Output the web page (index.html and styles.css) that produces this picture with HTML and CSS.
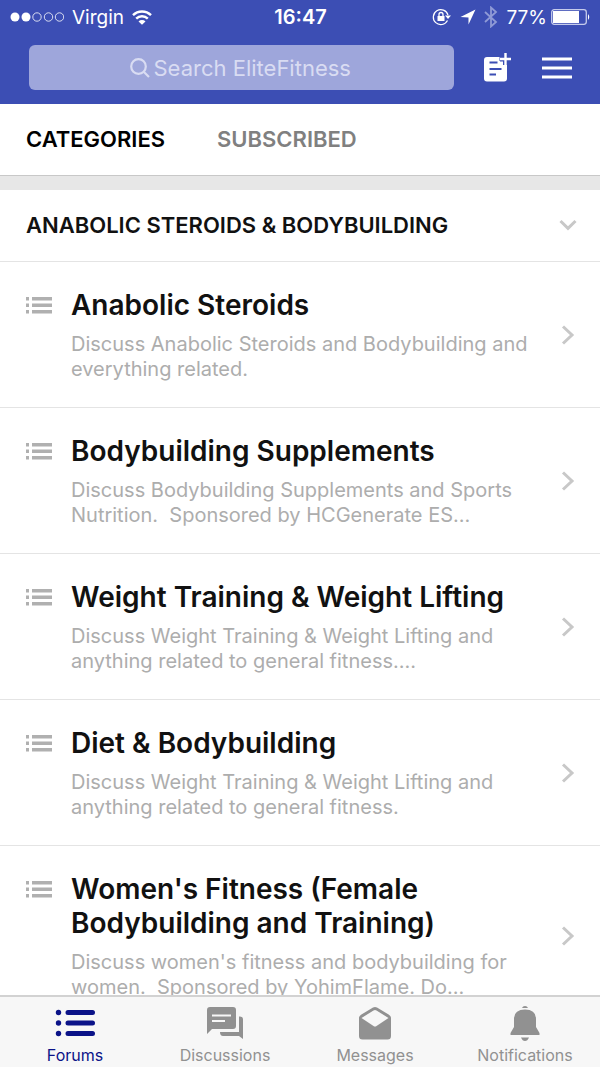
FILE: index.html
```html
<!DOCTYPE html>
<html lang="en">
  <head>
    <meta charset="UTF-8" />
    <meta name="viewport" content="width=device-width, initial-scale=1.0" />
    <title>EliteFitness Forums</title>
    <link rel="stylesheet" href="styles.css">
  </head>
  <body>
    <!-- Shared icons -->
    <svg class="sprite" aria-hidden="true">
      <symbol id="icon-list" viewBox="0 0 26 17">
        <path d="M0 0h3v3.500H0zM6 0h20v3.500H6zM0 6.500h3V10H0zM6 6.500h20V10H6zM0 13h3v3.500H0zM6 13h20v3.500H6z" />
      </symbol>
      <symbol id="icon-chevron" viewBox="0 0 14 20">
        <path d="M2 1.500 11 10l-9 8.500" fill="none" stroke="currentColor" stroke-width="3" />
      </symbol>
    </svg>

    <header class="header">
      <div class="status">
        <div class="status-left">
          <svg width="54" height="10" viewBox="0 0 54 10">
            <g fill="#fff"><circle cx="5" cy="5" r="4.500" /><circle cx="16" cy="5" r="4.500" /></g>
            <g fill="none" stroke="#fff" stroke-width="0.800"><circle cx="27" cy="5" r="4.200" /><circle cx="38.500" cy="5" r="4.200" /><circle cx="49.500" cy="5" r="4.200" /></g>
          </svg>
          <span>Virgin</span>
          <svg width="20" height="15" viewBox="0 0 20 15">
            <g fill="none" stroke="#fff" stroke-width="2.400"><path d="M1 5.200a12.800 12.800 0 0 1 18 0" /><path d="M4.200 8.700a8.200 8.200 0 0 1 11.600 0" /></g>
            <path d="M10 14.800 6.500 11.400a4.900 4.900 0 0 1 7 0z" fill="#fff" />
          </svg>
        </div>
        <strong class="status-time">16:47</strong>
        <div class="status-right">
          <svg width="20" height="18" viewBox="0 0 20 18">
            <path d="M15.500 12.500A7.500 7.500 0 1 1 16 7" fill="none" stroke="#fff" stroke-width="1.200" />
            <path d="M13 7.500h6l-3 3.500zM5.500 8h7v5h-7z" fill="#fff" />
            <path d="M7 8V6.500a2 2 0 0 1 4 0V8" fill="none" stroke="#fff" stroke-width="1.300" />
          </svg>
          <svg width="16" height="16" viewBox="0 0 16 16"><path d="M15.500.5 8.500 15.500V8.500L.5 8z" fill="#fff" /></svg>
          <svg width="14" height="22" viewBox="0 0 14 22"><path d="M1 6l11 10-5 4.500V1.500L12 6 1 16" fill="none" stroke="#8f9ad6" stroke-width="1.800" /></svg>
          <div class="charge">
            <span>77%</span>
            <svg width="40" height="16" viewBox="0 0 40 16">
              <rect x="0.700" y="0.700" width="34.600" height="14.600" rx="2.500" fill="none" stroke="#c5cbeb" stroke-width="1.300" />
              <path d="M2 2h26v12H2z" fill="#fff" /><path d="M37 5q2.500 3 0 6z" fill="#fff" />
            </svg>
          </div>
        </div>
      </div>
      <div class="toolbar">
        <label class="search">
          <svg width="20" height="20" viewBox="0 0 20 20" fill="none" stroke="currentColor" stroke-width="2.200"><circle cx="8.500" cy="8.500" r="7.300" /><path d="M13.500 13.500 19 19" /></svg>
          <input type="search" placeholder="Search EliteFitness" aria-label="Search EliteFitness" />
        </label>
        <button class="icon-button" aria-label="New post">
          <svg width="27" height="32" viewBox="0 0 27 32">
            <path d="M3 5h12.500v4H19v4h4v13.500a3 3 0 0 1-3 3H3a3 3 0 0 1-3-3V8a3 3 0 0 1 3-3z" fill="#fff" />
            <path d="M5.500 10.500h8M5.500 17h12M5.500 22.500H12" stroke="#3c4eb4" stroke-width="2.200" />
            <path d="M21.500 1v12M16 7h11" stroke="#3c4eb4" stroke-width="5" />
            <path d="M21.500 1v12M16 7h11" stroke="#fff" stroke-width="2.400" />
          </svg>
        </button>
        <button class="icon-button" aria-label="Menu">
          <svg width="30" height="22" viewBox="0 0 30 22"><path d="M0 2h30M0 11h30M0 20h30" stroke="#fff" stroke-width="3" /></svg>
        </button>
      </div>
    </header>

    <nav class="tabs">
      <a class="active" href="#categories">CATEGORIES</a>
      <a href="#subscribed">SUBSCRIBED</a>
    </nav>

    <main class="forums" id="categories">
      <button class="section">
        <span>ANABOLIC STEROIDS &amp; BODYBUILDING</span>
        <svg width="18" height="12" viewBox="0 0 18 12"><path d="M1.500 2 9 9.300 16.500 2" fill="none" stroke="#c8c8c8" stroke-width="3" /></svg>
      </button>

      <a class="forum" href="#anabolic-steroids">
        <svg class="forum-icon"><use href="#icon-list" /></svg>
        <div class="forum-text">
          <h2>Anabolic Steroids</h2>
          <p>Discuss Anabolic Steroids and Bodybuilding and<br />everything related.</p>
        </div>
        <svg class="chevron"><use href="#icon-chevron" /></svg>
      </a>

      <a class="forum" href="#supplements">
        <svg class="forum-icon"><use href="#icon-list" /></svg>
        <div class="forum-text">
          <h2>Bodybuilding Supplements</h2>
          <p>Discuss Bodybuilding Supplements and Sports<br />Nutrition.&nbsp; Sponsored by HCGenerate ES...</p>
        </div>
        <svg class="chevron"><use href="#icon-chevron" /></svg>
      </a>

      <a class="forum" href="#weight-training">
        <svg class="forum-icon"><use href="#icon-list" /></svg>
        <div class="forum-text">
          <h2>Weight Training &amp; Weight Lifting</h2>
          <p>Discuss Weight Training &amp; Weight Lifting and<br />anything related to general fitness....</p>
        </div>
        <svg class="chevron"><use href="#icon-chevron" /></svg>
      </a>

      <a class="forum" href="#diet">
        <svg class="forum-icon"><use href="#icon-list" /></svg>
        <div class="forum-text">
          <h2>Diet &amp; Bodybuilding</h2>
          <p>Discuss Weight Training &amp; Weight Lifting and<br />anything related to general fitness.</p>
        </div>
        <svg class="chevron"><use href="#icon-chevron" /></svg>
      </a>

      <a class="forum" href="#womens-fitness">
        <svg class="forum-icon"><use href="#icon-list" /></svg>
        <div class="forum-text">
          <h2>Women's Fitness (Female<br />Bodybuilding and Training)</h2>
          <p>Discuss women's fitness and bodybuilding for<br />women.&nbsp; Sponsored by YohimFlame. Do...</p>
        </div>
        <svg class="chevron"><use href="#icon-chevron" /></svg>
      </a>
    </main>

    <nav class="bottom-nav">
      <a class="active" href="#forums">
        <svg width="40" height="36" viewBox="0 0 40 36">
          <g fill="currentColor"><circle cx="3.500" cy="7.500" r="2.700" /><circle cx="3.500" cy="18" r="2.700" /><circle cx="3.500" cy="28.500" r="2.700" /></g>
          <path d="M13 7.500h24.500M13 18h24.500M13 28.500h24.500" stroke="currentColor" stroke-width="5" stroke-linecap="round" />
        </svg>
        <span>Forums</span>
      </a>
      <a href="#discussions">
        <svg width="36" height="36" viewBox="0 0 36 36">
          <path d="M3 2h23a3 3 0 0 1 3 3v16a3 3 0 0 1-3 3H5l-5 5V5a3 3 0 0 1 3-3z" fill="currentColor" />
          <path d="M32 11.500h1a3 3 0 0 1 3 3V34l-4-3H16q-3 0-3-4h19z" fill="currentColor" />
          <path d="M5 10.500h19M5 16h13" stroke="#f7f7f7" stroke-width="2" />
        </svg>
        <span>Discussions</span>
      </a>
      <a href="#messages">
        <svg width="34" height="36" viewBox="0 0 34 36">
          <path d="M15 2.500q2-1 4 0l12 7.300q2 1.200 2 3.200v18q0 3.500-3.500 3.500h-25Q1 34.500 1 31V13q0-2 2-3.200z" fill="currentColor" />
          <path d="m3.500 13 12-7.500q1.500-1 3 0l12 7.500-12 8q-1.500 1-3 0z" fill="#f7f7f7" />
        </svg>
        <span>Messages</span>
      </a>
      <a href="#notifications">
        <svg width="30" height="36" viewBox="0 0 30 36" fill="currentColor">
          <path d="M12 3a3.200 3.200 0 0 1 6 0zM4 14Q4 4.500 15 4.500T26 14v8l3.500 6v2H.5v-2L4 22zM11 32.500h8q-1.500 3.500-4 3.500t-4-3.500z" />
        </svg>
        <span>Notifications</span>
      </a>
    </nav>
  </body>
</html>
```
FILE: styles.css
```css
* {
  box-sizing: border-box;
}
body {
  display: flex;
  flex-direction: column;
  height: 100vh;
  margin: 0;
  background-color: #fff;
  color: #111;
  font-family: Inter, sans-serif;
}
a {
  color: inherit;
  text-decoration: none;
}
button {
  padding: 0;
  border: none;
  background: none;
  color: inherit;
  font: inherit;
}
svg {
  flex: none;
}
.sprite {
  display: none;
}

/* Header */
.header {
  flex: none;
  background-color: #3c4eb4;
  color: #fff;
}
.status {
  display: grid;
  grid-template-columns: 1fr auto 1fr;
  align-items: center;
  height: 34px;
  padding: 0 9px 0 10px;
  font-size: 19px;
}
.status-left,
.status-right {
  display: flex;
  align-items: center;
  gap: 8px;
}
.status-right {
  justify-content: flex-end;
}
.charge {
  display: flex;
  align-items: center;
  gap: 4px;
}
.status-time {
  font-size: 20px;
  font-weight: 600;
}
.toolbar {
  display: flex;
  align-items: center;
  padding: 11px 28px 14px 29px;
}
.search {
  display: flex;
  flex: 1;
  align-items: center;
  justify-content: center;
  gap: 4px;
  height: 45px;
  margin-right: 30px;
  border-radius: 6px;
  background-color: #9ea6db;
  color: #d9dcf2;
}
.search input {
  width: 200px;
  padding: 0;
  border: none;
  outline: none;
  background: none;
  color: #fff;
  font: 22px Inter, sans-serif;
  appearance: none;
}
.search input::-webkit-search-cancel-button {
  display: none;
}
.search input::placeholder {
  color: #d9dcf2;
}
.icon-button {
  display: flex;
}
.icon-button + .icon-button {
  margin-left: 31px;
}

/* Top tabs */
.tabs {
  display: flex;
  flex: none;
  gap: 52px;
  align-items: center;
  height: 72px;
  padding: 0 26px 2px;
  border-bottom: 1px solid #c8c8c8;
  color: #808080;
  font-size: 22px;
  font-weight: 600;
}
.tabs .active {
  color: #000;
}

/* Forum list */
.forums {
  flex: 1;
  min-height: 0;
  overflow: hidden;
  border-top: 14px solid #e7e7e7;
}
.section {
  display: flex;
  align-items: center;
  justify-content: space-between;
  width: 100%;
  height: 72px;
  padding: 0 23px 2px 26px;
  border-bottom: 1px solid #e4e4e4;
  font-size: 22px;
  font-weight: 600;
}
.forum {
  display: flex;
  padding: 26px 25px 25px 26px;
  border-bottom: 1px solid #e4e4e4;
}
.forum-icon {
  width: 26px;
  height: 17px;
  margin: 9px 19px 0 0;
  fill: #b0b0b0;
}
.forum-text {
  flex: 1;
  white-space: nowrap;
}
.forum h2 {
  margin: 0 0 10px;
  font-size: 28px;
  font-weight: 600;
  line-height: 34px;
}
.forum p {
  margin: 0;
  color: #adadad;
  font-size: 20px;
  line-height: 25px;
}
.chevron {
  align-self: center;
  width: 14px;
  height: 20px;
  color: #c8c8c8;
}

/* Bottom navigation */
.bottom-nav {
  display: grid;
  flex: none;
  grid-template-columns: repeat(4, 1fr);
  height: 72px;
  border-top: 2px solid #d2d2d2;
  background-color: #f7f7f7;
  color: #919191;
}
.bottom-nav a {
  display: flex;
  flex-direction: column;
  gap: 4px;
  align-items: center;
  padding-top: 8px;
  font-size: 16px;
  line-height: 20px;
}
.bottom-nav .active {
  color: #0b1388;
}
```
